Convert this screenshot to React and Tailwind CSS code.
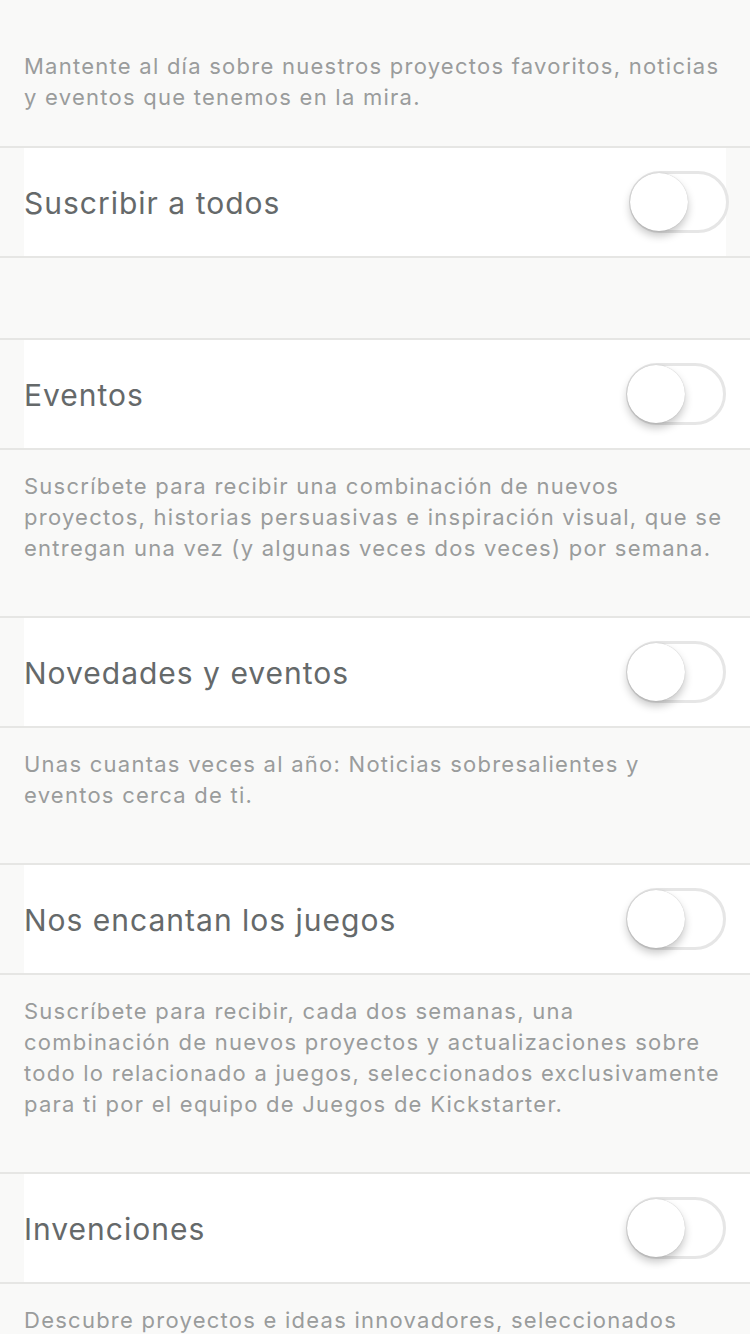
import React from 'react'

function Toggle({ shift = '' }) {
  return (
    <div className={`relative w-[100px] h-[62px] rounded-full border-[3px] border-[#e6e6e6] bg-white shrink-0 ${shift}`}>
      <div className="absolute left-[-2px] top-[-1px] w-[58px] h-[58px] rounded-full bg-white shadow-[0_5px_8px_rgba(0,0,0,0.22),0_0_1px_rgba(0,0,0,0.25)]" />
    </div>
  )
}

function Row({ title, full = true, h = 'h-[108px]' }) {
  return (
    <div className="border-y-2 border-[#e6e6e4] flex">
      <div className={`ml-6 ${full ? 'flex-1 pr-6' : 'w-[702px] pr-0'} ${h} bg-white flex items-center justify-between`}>
        <span className="text-[30px] tracking-[1px] text-[#65696a] pt-[2px]">{title}</span>
        <Toggle shift={full ? '' : '-mr-[3px]'} />
      </div>
    </div>
  )
}

function Desc({ children, pt = 'pt-[21px]', pb = 'pb-[52px]' }) {
  return (
    <p className={`px-6 ${pt} ${pb} text-[22px] tracking-[1.25px] leading-[31px] text-[#9a9c9c]`}>{children}</p>
  )
}

const items = [
  {
    title: 'Eventos',
    desc: 'Suscríbete para recibir una combinación de nuevos proyectos, historias persuasivas e inspiración visual, que se entregan una vez (y algunas veces dos veces) por semana.',
  },
  {
    title: 'Novedades y eventos',
    desc: 'Unas cuantas veces al año: Noticias sobresalientes y eventos cerca de ti.',
  },
  {
    title: 'Nos encantan los juegos',
    desc: 'Suscríbete para recibir, cada dos semanas, una combinación de nuevos proyectos y actualizaciones sobre todo lo relacionado a juegos, seleccionados exclusivamente para ti por el equipo de Juegos de Kickstarter.',
  },
  {
    title: 'Invenciones',
    desc: 'Descubre proyectos e ideas innovadores, seleccionados para ti por nuestro equipo.',
  },
]

export default function App() {
  return (
    <div className="w-[750px] h-[1334px] overflow-hidden bg-[#f9f9f8]" style={{ fontFamily: 'Inter, "Liberation Sans", sans-serif' }}>
      <Desc pt="pt-[51px]" pb="pb-[33px]">
        Mantente al día sobre nuestros proyectos favoritos, noticias y eventos que tenemos en la mira.
      </Desc>
      <Row title="Suscribir a todos" full={false} h="h-[108px]" />
      <div className="h-[80px]" />
      {items.map((it) => (
        <div key={it.title}>
          <Row title={it.title} />
          <Desc>{it.desc}</Desc>
        </div>
      ))}
    </div>
  )
}
